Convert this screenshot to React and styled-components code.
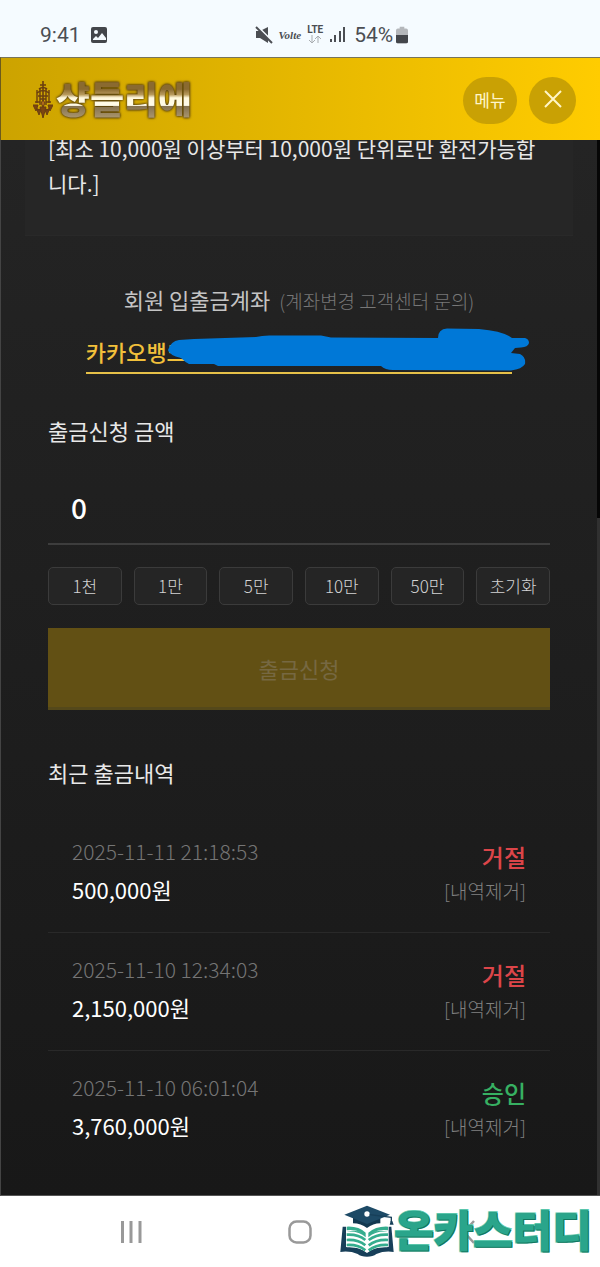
import React, { useState } from 'react';
import styled, { createGlobalStyle } from 'styled-components';

const GlobalStyle = createGlobalStyle`
  * {
    box-sizing: border-box;
  }
  body {
    margin: 0;
    background: #1a1a1a;
    font-family: "Noto Sans CJK KR", "Noto Sans", sans-serif;
    font-weight: 300;
  }
  button, input {
    font-family: inherit;
    font-weight: inherit;
  }
  h2, p, ul {
    margin: 0;
    padding: 0;
  }
`
const Screen = styled.div`
  display: flex;
  flex-direction: column;
  min-height: 100vh;
`
const StatusBar = styled.div`
  display: flex;
  align-items: center;
  gap: 9px;
  height: 57px;
  padding: 12px 40px 0;
  background: #f5fbff;
  color: #4b4e53;
  font-family: Roboto, sans-serif;
  font-weight: 400;
  font-size: 21px;
`
const StatusRight = styled.div`
  display: flex;
  align-items: center;
  gap: 6px;
  margin-left: 138px;
`
const Volte = styled.span`
  font-family: "Liberation Serif", serif;
  font-size: 11px;
  font-style: italic;
  font-weight: 700;
`
const Lte = styled.span`
  display: flex;
  flex-direction: column;
  align-items: center;
  font-size: 10px;
  font-weight: 700;
  line-height: 10px;
`
const Battery = styled.span`
  display: flex;
  align-items: center;
  gap: 3px;
  margin-left: 2px;
`
const Header = styled.header`
  position: relative;
  z-index: 1;
  display: flex;
  align-items: center;
  gap: 12px;
  height: 83px;
  padding: 2px 24px 0 32px;
  border-top: 1px solid #77745a;
  border-left: 1px solid #6c5a1c;
  background: linear-gradient(90deg, #cca300, #ffcc00);
`
const Logo = styled.a`
  display: flex;
  align-items: center;
  gap: 3px;
  margin-right: auto;
  text-decoration: none;
`
const LogoText = styled.span`
  background: linear-gradient(180deg, #8a6a30 30%, #b89a5c 40%, #fff8dc 46%, #fffbe8 60%, #857250 62%, #a8946c 82%);
  background-clip: text;
  -webkit-background-clip: text;
  color: transparent;
  filter: drop-shadow(0 0 1px #4f3a0a) drop-shadow(0 0 1px #6b5010);
  font-size: 37px;
  font-weight: 900;
  line-height: 50px;
  padding-bottom: 4px;
`
const RoundButton = styled.button`
  display: flex;
  align-items: center;
  justify-content: center;
  width: ${props => props.$wide ? '54px' : '47px'};
  height: 47px;
  padding: 0 0 2px;
  border: 0;
  border-radius: 24px;
  background: #c9a104;
  color: #fff6c8;
  font-size: 17px;
  font-weight: 400;
`
const Main = styled.main`
  flex: 1;
  padding: 0 27px 26px 24px;
  border-left: 1px solid #444;
  border-bottom: 1px solid #555;
  background:
    linear-gradient(180deg, #060606 378px, #303030 378px) right / 3px 100% no-repeat,
    linear-gradient(180deg, #242424, #181818);
  color: #e8e8e8;
`
const Notice = styled.p`
  margin-top: -9px;
  padding: 0 33px 34px 23px;
  border-bottom: 1px solid #292929;
  background: #262626;
  font-size: 21px;
  font-weight: 400;
  line-height: 35px;
`
const Body = styled.div`
  padding: 0 23px;
`
const Account = styled.section`
  width: 85%;
  margin: 47px auto 40px;
`
const AccountTitle = styled.h2`
  color: #c4c4c4;
  font-size: 22px;
  font-weight: 400;
  line-height: 32px;
  text-align: center;
  white-space: nowrap;
  small {
    margin-left: 4px;
    color: #777;
    font-size: 19px;
    font-weight: 300;
  }
`
const AccountNumber = styled.div`
  position: relative;
  margin-top: 18px;
  padding-bottom: 5px;
  border-bottom: 2px solid #e6c048;
  color: #f2c03b;
  font-size: 22px;
  font-weight: 500;
  line-height: 32px;
`
const Marker = styled.svg`
  position: absolute;
  top: -8px;
  left: 80px;
`
const Label = styled.label`
  display: block;
  font-size: 22px;
  font-weight: 400;
  line-height: 32px;
`
const Title = styled.h2`
  margin: 46px 0 27px;
  font-size: 22px;
  font-weight: 400;
  line-height: 32px;
`
const AmountInput = styled.input`
  display: block;
  width: 100%;
  height: 73px;
  margin: 26px 0 22px;
  padding: 0 23px 2px;
  border: 0;
  border-bottom: 2px solid #3d3d3d;
  outline: none;
  background: transparent;
  color: #fff;
  font-size: 28px;
  font-weight: 500;
`
const Presets = styled.div`
  display: grid;
  grid-template-columns: repeat(6, 1fr);
  gap: 12px;
`
const Preset = styled.button`
  height: 38px;
  padding: 0 0 2px;
  border: 1px solid #3b3b3b;
  border-radius: 5px;
  background: #252525;
  color: #d4d4d4;
  font-size: 17px;
`
const Submit = styled.button`
  width: 100%;
  height: 82px;
  margin-top: 23px;
  padding: 0;
  border: 0;
  border-bottom: 3px solid #54481a;
  background: #625014;
  color: #766842;
  font-size: 22px;
  font-weight: 400;
`
const History = styled.ul`
  list-style: none;
`
const HistoryRow = styled.li`
  display: flex;
  align-items: flex-end;
  justify-content: space-between;
  height: 118px;
  padding: 0 24px 24px;
  border-bottom: 1px solid #292929;
  &:last-child {
    border-bottom-color: transparent;
  }
`
const RowDate = styled.div`
  color: #757575;
  font-size: 21px;
  line-height: 38px;
`
const RowAmount = styled.div`
  color: #fff;
  font-size: 22px;
  font-weight: 400;
  line-height: 38px;
`
const RowSide = styled.div`
  display: flex;
  flex-direction: column;
  align-items: flex-end;
`
const RowStatus = styled.strong`
  color: ${props => props.$approved ? '#37b062' : '#dc4549'};
  font-size: 24px;
  font-weight: 500;
  line-height: 34px;
`
const RemoveButton = styled.button`
  padding: 0;
  border: 0;
  background: none;
  color: #808080;
  font-size: 19px;
  line-height: 34px;
`
const NavBar = styled.nav`
  position: relative;
  display: flex;
  align-items: center;
  justify-content: space-around;
  height: 71px;
  padding: 0 46px;
  background: #fff;
`
const NavButton = styled.button`
  display: flex;
  padding: 0;
  border: 0;
  background: none;
`
const Brand = styled.div`
  position: absolute;
  right: 8px;
  bottom: 7px;
  display: flex;
  align-items: center;
`
const BrandText = styled.span`
  color: #2aa58b;
  -webkit-text-stroke: 2px #63cfb4;
  paint-order: stroke fill;
  text-shadow: 1px 1px 0 #14765f, 0 0 1px #14765f;
  font-size: 43px;
  font-weight: 900;
  line-height: 52px;
  padding-bottom: 6px;
`

const presets = [
  { label: '1천', value: 1000 },
  { label: '1만', value: 10000 },
  { label: '5만', value: 50000 },
  { label: '10만', value: 100000 },
  { label: '50만', value: 500000 },
  { label: '초기화', value: 0 }
];

const withdrawals = [
  { id: 1, date: '2025-11-11 21:18:53', amount: '500,000원', status: '거절' },
  { id: 2, date: '2025-11-10 12:34:03', amount: '2,150,000원', status: '거절' },
  { id: 3, date: '2025-11-10 06:01:04', amount: '3,760,000원', status: '승인' }
];

function StatusIcons(){
  return (
    <StatusBar>
      <span>9:41</span>
      <svg width="18" height="18" viewBox="0 0 18 18">
        <rect x="1" y="1" width="16" height="16" rx="2" fill="#43464b" />
        <circle cx="6" cy="6" r="2" fill="#f5fbff" />
        <path d="M3 13l3-3 2 2 4-5 4 5v2H3z" fill="#f5fbff" />
      </svg>
      <StatusRight>
        <svg width="18" height="18" viewBox="0 0 18 18">
          <path d="M1 5h4l8-4v16l-8-5H1z" fill="#4b4e53" />
          <path d="M2 0l16 16" stroke="#f5fbff" strokeWidth="2" />
          <path d="M1 1l16 16" stroke="#4b4e53" strokeWidth="2" />
        </svg>
        <Volte>Volte</Volte>
        <Lte>
          LTE
          <svg width="14" height="9" viewBox="0 0 14 9" fill="none" stroke="#a9adb1">
            <path d="M4 0v7M1 5l3 3 3-3M10 8V1M7 4l3-3 3 3" />
          </svg>
        </Lte>
        <svg width="17" height="17" viewBox="0 0 17 17" fill="#4b4e53">
          <rect x="1" y="13" width="2" height="3" />
          <rect x="5" y="9" width="2" height="7" />
          <rect x="10" y="5" width="2" height="11" />
          <rect x="14" y="1" width="2" height="15" />
        </svg>
        <Battery>
          54%
          <svg width="12" height="18" viewBox="0 0 13 18">
            <path d="M4 0h5v2h2q2 0 2 2v12q0 2-2 2H2q-2 0-2-2V4q0-2 2-2h2z" fill="#b4b7bb" />
            <path d="M0 9h13v7q0 2-2 2H2q-2 0-2-2z" fill="#43464b" />
          </svg>
        </Battery>
      </StatusRight>
    </StatusBar>
  );
}

function Chandelier(){
  return (
    <svg width="20" height="38" viewBox="0 0 20 38" fill="none" stroke="#6b3f10">
      <path d="M10 0v36M7 4h6M6 8q4-3 8 0M4 12q6-5 12 0M5 15h10M7 18h6" strokeWidth="1.6" />
      <path d="M2 25q3 7 8 1 5 6 8-1M4 9v13M16 9v13M2 21h5M13 21h5M7 7v17M13 7v17" strokeWidth="1.4" />
      <path d="M0 24h5l-2 6zM15 24h5l-3 6zM7 26h6l-3 11zM4 29h4l-2 5zM12 29h4l-2 5z" fill="#7d4510" />
      <path d="M8 22l2-3 2 3-2 4z" fill="#b06a1c" />
    </svg>
  );
}

function BookIcon(){
  return (
    <svg width="54" height="52" viewBox="119 76 162 156">
      <path d="M127 141l-7 76q28-4 52 6 10 8 28 8t28-8q24-10 52-6l-7-76h-12v62q-38-3-61 15-23-18-61-15v-62z" fill="#173f59" />
      <path d="M137 137q40-4 63 17 23-21 65-17v65q-41-3-65 18-24-21-63-18z" fill="#fff" />
      <path d="M139 141q36-2 57 18v14q-21-20-57-17 28-7 44 4-18-12-44-8zM263 141q-36-2-59 18v14q21-20 59-17-30-7-46 4 18-12 46-8z" fill="#35ad8e" />
      <g fill="none" stroke="#35ad8e" strokeWidth="8">
        <path d="M139 165q35-2 56 16M139 181q35-2 56 16M139 196q35-2 56 16" />
        <path d="M263 165q-35-2-58 16M263 181q-35-2-58 16M263 196q-35-2-58 16" />
      </g>
      <path d="M158 113v18q24 0 42 14 18-14 40-14v-18z" fill="#123850" />
      <path d="M200 78l69 27-69 28-68-28z" fill="#1d4a66" />
      <circle cx="200" cy="103" r="8" fill="#fff" />
      <path d="M208 105l65 8v14" fill="none" stroke="#173f59" strokeWidth="4" />
      <path d="M271 124h5l4 11h-12z" fill="#173f59" />
    </svg>
  );
}

function Withdrawal(props){
  const { item, onClickingRemove } = props;

  return (
    <HistoryRow>
      <div>
        <RowDate>{item.date}</RowDate>
        <RowAmount>{item.amount}</RowAmount>
      </div>
      <RowSide>
        <RowStatus $approved={item.status === '승인'}>{item.status}</RowStatus>
        <RemoveButton type="button" onClick={()=> onClickingRemove(item.id)}>[내역제거]</RemoveButton>
      </RowSide>
    </HistoryRow>
  );
}

function App(){
  const [amount, setAmount] = useState(0);
  const [items, setItems] = useState(withdrawals);

  const handlePreset = (value) => {
    setAmount(value === 0 ? 0 : amount + value);
  };

  const handleAmount = (event) => {
    setAmount(Number(event.target.value.replace(/\D/g, '')));
  };

  return (
    <Screen>
      <GlobalStyle />
      <StatusIcons />
      <Header>
        <Logo href="#">
          <Chandelier />
          <LogoText>샹들리에</LogoText>
        </Logo>
        <RoundButton type="button" $wide>메뉴</RoundButton>
        <RoundButton type="button" aria-label="닫기">
          <svg width="18" height="18" viewBox="0 0 18 18" stroke="#fff6c8" strokeWidth="2">
            <path d="M1 1l16 16M17 1L1 17" />
          </svg>
        </RoundButton>
      </Header>
      <Main>
        <Notice>[최소 10,000원 이상부터 10,000원 단위로만 환전가능합니다.]</Notice>
        <Body>
          <Account>
            <AccountTitle>회원 입출금계좌 <small>(계좌변경 고객센터 문의)</small></AccountTitle>
            <AccountNumber>
              카카오뱅크
              <Marker width="364" height="46" viewBox="165 327 364 46">
                <path
                  d="M167 350Q170 341 178 340L193 339 255 337Q262 335 272 335.500L320 335.500 330 337.500 437 338Q437 329 446 328.500L478 329Q502 331 511 338L524 338Q528 339 528 343 527 347 520 347.500L514 348 510 353 519 354Q525 357 524 364 521 369 510 370.500L392 370Q384 370 380 366L217 366 213 364 188 364Q184 362 180 358 168 355 167 350Z"
                  fill="#0078d7"
                />
              </Marker>
            </AccountNumber>
          </Account>
          <Label htmlFor="amount">출금신청 금액</Label>
          <AmountInput id="amount" inputMode="numeric" value={amount.toLocaleString('en-US')} onChange={handleAmount} />
          <Presets>
            {presets.map((preset) =>
              <Preset type="button" key={preset.label} onClick={()=> handlePreset(preset.value)}>{preset.label}</Preset>
            )}
          </Presets>
          <Submit type="button" disabled={amount === 0}>출금신청</Submit>
          <Title>최근 출금내역</Title>
          <History>
            {items.map((item) =>
              <Withdrawal
                key={item.id}
                item={item}
                onClickingRemove={(id)=> setItems(items.filter((other) => other.id !== id))}
              />
            )}
          </History>
        </Body>
      </Main>
      <NavBar>
        <NavButton type="button" aria-label="최근 앱">
          <svg width="24" height="24" viewBox="0 0 24 24" stroke="#999" strokeWidth="3">
            <path d="M3.500 1v22M12 1v22M21 1v22" />
          </svg>
        </NavButton>
        <NavButton type="button" aria-label="홈">
          <svg width="24" height="24" viewBox="0 0 24 24" fill="none" stroke="#999" strokeWidth="2.500">
            <rect x="1.500" y="1.500" width="21" height="21" rx="7" />
          </svg>
        </NavButton>
        <NavButton type="button" aria-label="뒤로">
          <svg width="24" height="24" viewBox="0 0 24 24" fill="none" stroke="#999" strokeWidth="2.500">
            <path d="M17 1L7 12l10 11" />
          </svg>
        </NavButton>
        <Brand>
          <BookIcon />
          <BrandText>온카스터디</BrandText>
        </Brand>
      </NavBar>
    </Screen>
  );
}

export default App;
